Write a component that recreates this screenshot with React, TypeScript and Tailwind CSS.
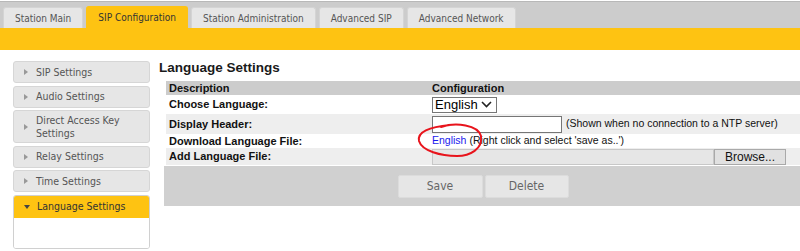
import React from "react";

const verdana = "[font-family:'DejaVu_Sans_Condensed','DejaVu_Sans',sans-serif]";
const arial = "[font-family:'Liberation_Sans',Arial,sans-serif]";

function Tab({ label, active }: { label: string; active?: boolean }) {
  return active ? (
    <div className={`h-[22px] px-[11px] flex items-center rounded-t-[3px] bg-[#fec312] border border-[#fec312] border-b-0 text-[10px] text-[#333] ${verdana}`}>
      {label}
    </div>
  ) : (
    <div className={`h-[21px] px-[11px] flex items-center rounded-t-[3px] bg-[#e6e6e6] border border-[#d4d4d4] border-b-0 text-[10px] text-[#555] ${verdana}`}>
      {label}
    </div>
  );
}

function SideItem({ label, tall }: { label: string; tall?: boolean }) {
  return (
    <div
      className={`${tall ? "h-[33px]" : "h-[22px]"} flex items-center rounded-[3px] bg-[#e6e6e6] border border-[#d6d6d6] pl-[10px] pr-[6px] text-[10.5px] leading-[13px] text-[#555] ${verdana}`}
    >
      <svg width="4" height="6" viewBox="0 0 4 6" className="shrink-0 mr-[8px]">
        <path d="M0 0 L4 3 L0 6 Z" fill="#999" />
      </svg>
      <span>{label}</span>
    </div>
  );
}

export default function App() {
  return (
    <div className={`relative w-[800px] h-[251px] bg-white overflow-hidden ${arial}`}>
      {/* tab bar */}
      <div className="pt-[1px]">
        <div className="h-[27px] border-t border-[#b8b8b8] bg-[#cccccc] flex items-end pl-[3px] gap-[3px]">
          <Tab label="Station Main" />
          <Tab label="SIP Configuration" active />
          <Tab label="Station Administration" />
          <Tab label="Advanced SIP" />
          <Tab label="Advanced Network" />
        </div>
      </div>
      <div className="h-[22px] bg-[#fec312]" />

      <div className="flex">
        {/* sidebar */}
        <div className="ml-[13px] mt-[11px] w-[137px] flex flex-col gap-[2.5px]">
          <SideItem label="SIP Settings" />
          <SideItem label="Audio Settings" />
          <SideItem label="Direct Access Key Settings" tall />
          <SideItem label="Relay Settings" />
          <SideItem label="Time Settings" />
          <div className="rounded-[3px] border border-[#d0d0d0] overflow-hidden">
            <div className={`h-[22px] flex items-center bg-[#fec312] pl-[10px] text-[10.5px] text-[#333] ${verdana}`}>
              <svg width="6" height="4" viewBox="0 0 6 4" className="shrink-0 mr-[7px]">
                <path d="M0 0 L6 0 L3 4 Z" fill="#444" />
              </svg>
              <span>Language Settings</span>
            </div>
            <div className="h-[30px] bg-white" />
          </div>
        </div>

        {/* main */}
        <div className="flex-1 ml-[9px]">
          <h1 className="mt-[7px] h-[23px] text-[13.5px] leading-[22px] font-bold text-[#1a1a1a]">Language Settings</h1>
          <div className="ml-[7px] mt-[1px] text-[11px] text-[#111]">
            <div className="flex h-[14px] items-center bg-[#cccccc] font-bold">
              <div className="w-[266px] pl-[3px]">Description</div>
              <div>Configuration</div>
            </div>
            <div className="flex h-[19px] items-center bg-white">
              <div className="w-[266px] pl-[3px] font-bold">Choose Language:</div>
              <div className="h-[16px] w-[65px] border border-[#767676] bg-white flex items-center justify-between pl-[2px] pr-[4px] text-[13px] text-black">
                <span>English</span>
                <svg width="11" height="7" viewBox="0 0 11 7">
                  <path d="M1 1 L5.5 5.5 L10 1" fill="none" stroke="#222" strokeWidth="1.6" />
                </svg>
              </div>
            </div>
            <div className="flex h-[20px] items-center bg-[#eeeeee]">
              <div className="w-[266px] pl-[3px] font-bold">Display Header:</div>
              <div className="h-[17px] w-[130px] border border-[#767676] bg-white" />
              <span className="ml-[4px] text-[10.5px]">(Shown when no connection to a NTP server)</span>
            </div>
            <div className="flex h-[14px] items-center bg-white">
              <div className="w-[266px] pl-[3px] font-bold">Download Language File:</div>
              <span className="text-[10.5px] text-[#1a1aee]">English</span>
              <span className="ml-[3px] text-[10.5px]">(Right click and select 'save as..')</span>
            </div>
            <div className="flex h-[17px] items-center bg-[#eeeeee]">
              <div className="w-[266px] pl-[3px] font-bold">Add Language File:</div>
              <div className="h-[16px] w-[282px] border border-[#c8c8c8] bg-[#e6e6e6]" />
              <div className="h-[16px] w-[72px] border border-[#a9a9a9] bg-[#e1e1e1] flex items-center justify-center text-[12px] text-[#111]">
                Browse...
              </div>
            </div>
            <div className="mt-[1px] -ml-[2px] h-[40px] bg-[#d0d0d0] flex items-center justify-center gap-[2px] pl-[2px]">
              <div className={`h-[23px] w-[85px] rounded-[2px] border border-[#dcdcdc] bg-[#e6e6e6] flex items-center justify-center text-[12px] text-[#666] ${verdana}`}>
                Save
              </div>
              <div className={`h-[23px] w-[84px] rounded-[2px] border border-[#dcdcdc] bg-[#e6e6e6] flex items-center justify-center text-[12px] text-[#666] ${verdana}`}>
                Delete
              </div>
            </div>
          </div>
        </div>
      </div>

      {/* red annotation circle */}
      <svg className="absolute left-[414px] top-[120px] pointer-events-none" width="78" height="42" viewBox="0 0 78 42">
        <path
          d="M27 7 C 42 2, 64 5, 67 16 C 69 29, 56 36, 43 36 C 27 36, 8 31, 5 21 C 3 12, 15 7, 36 5"
          fill="none"
          stroke="#e8141c"
          strokeWidth="2"
          strokeLinecap="round"
        />
      </svg>
    </div>
  );
}
